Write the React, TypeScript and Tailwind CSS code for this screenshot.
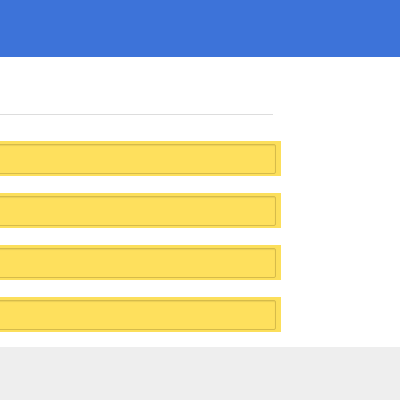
import React from 'react';

const rows = [0, 1, 2, 3];

const App: React.FC = () => {
  return (
    <div className="w-[400px] h-[400px] overflow-hidden bg-white flex flex-col" style={{ fontFamily: '"Liberation Sans", Arial, sans-serif' }}>
      <header className="h-[57px] shrink-0 bg-[#3d73d9]" />
      <main className="h-[290px] shrink-0 bg-white overflow-hidden">
        <div className="-ml-[20px] w-[301px]">
          <div className="mt-[57px] h-px w-[293px] bg-[#dddddd]" />
          <div className="mt-[26px] flex flex-col gap-[17px]">
            {rows.map((r) => (
              <div key={r} className="h-[35px] w-[301px] bg-[#fcdf5b] pt-[3px] pr-[5px]">
                <input
                  readOnly
                  className="block h-[30px] w-full rounded-[2px] border border-[#d6bb4a] bg-[#fee05d] shadow-[inset_0_1px_1px_rgba(0,0,0,0.08)] outline-none"
                />
              </div>
            ))}
          </div>
        </div>
      </main>
      <footer className="flex-1 bg-[#eeeeee]" />
    </div>
  );
};

export default App;
